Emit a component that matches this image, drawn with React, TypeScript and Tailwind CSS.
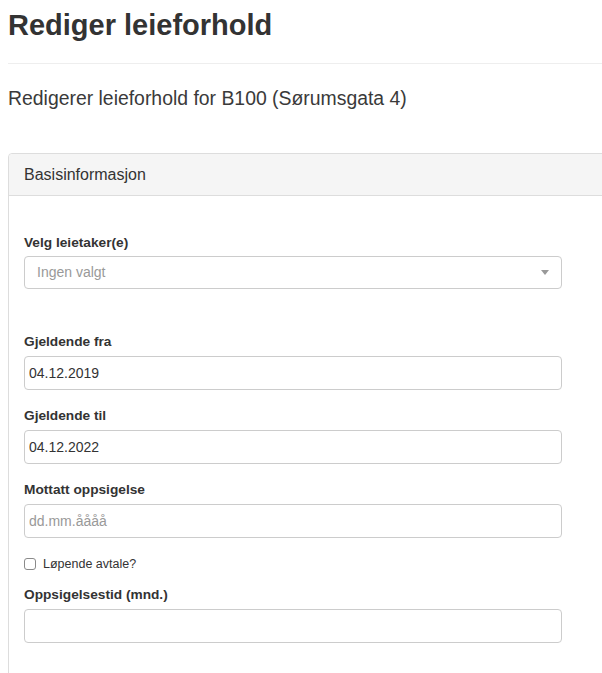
export default function App() {
  const font = { fontFamily: '"Liberation Sans", Arial, Helvetica, sans-serif' };

  return (
    <div className="w-full min-h-screen overflow-hidden bg-white text-[#333]" style={font}>
      <div className="pl-2">
        <h1 className="mt-[9px] text-[29px] leading-[32px] font-bold text-[#333]">Rediger leieforhold</h1>
        <hr className="mt-[22px] border-0 border-t border-[#eee]" />
        <p className="mt-[20px] text-[19.4px] leading-[28px] text-[#3a3a3a]">
          Redigerer leieforhold for B100 (Sørumsgata 4)
        </p>

        {/* panel */}
        <div className="mt-[41px] w-[640px] rounded-[4px] border border-[#ddd]">
          <div className="h-[42px] flex items-center pl-[15px] bg-[#f5f5f5] border-b border-[#ddd] rounded-t-[4px]">
            <span className="text-[16px] text-[#333]">Basisinformasjon</span>
          </div>

          <div className="pl-[15px] pt-[37px] pb-10">
            <div className="mb-[43px]">
              <label className="block text-[13.7px] leading-[20px] font-bold mb-[3px]">Velg leietaker(e)</label>
              <div className="w-[538px] h-[33px] rounded-[4px] border border-[#ccc] flex items-center justify-between pl-[12px] pr-[12px]">
                <span className="text-[14px] text-[#999]">Ingen valgt</span>
                <span className="w-0 h-0 border-x-[4px] border-t-[5px] border-x-transparent border-t-[#999]" />
              </div>
            </div>

            <Field label="Gjeldende fra" value="04.12.2019" />
            <Field label="Gjeldende til" value="04.12.2022" />
            <Field label="Mottatt oppsigelse" placeholder="dd.mm.åååå" />

            <div className="h-[20px] mb-[11px] flex items-center gap-[7px]">
              <span className="w-[12px] h-[12px] rounded-[3px] border border-[#8a8a8a] bg-white" />
              <span className="text-[12.5px] text-[#333]">Løpende avtale?</span>
            </div>

            <Field label="Oppsigelsestid (mnd.)" wide />
          </div>
        </div>
      </div>
    </div>
  );
}

function Field({ label, value, placeholder, wide }: { label: string; value?: string; placeholder?: string; wide?: boolean }) {
  return (
    <div className="mb-[16px]">
      <label className="block text-[13.7px] leading-[20px] font-bold mb-[4px] text-[#333]">{label}</label>
      <input
        type="text"
        readOnly
        value={value ?? ''}
        placeholder={placeholder}
        className={
          'block w-[538px] h-[34px] rounded-[4px] border border-[#ccc] text-[14px] text-[#333] placeholder:text-[#999] outline-none ' +
          (wide ? 'px-[12px]' : 'px-[4px]')
        }
      />
    </div>
  );
}
